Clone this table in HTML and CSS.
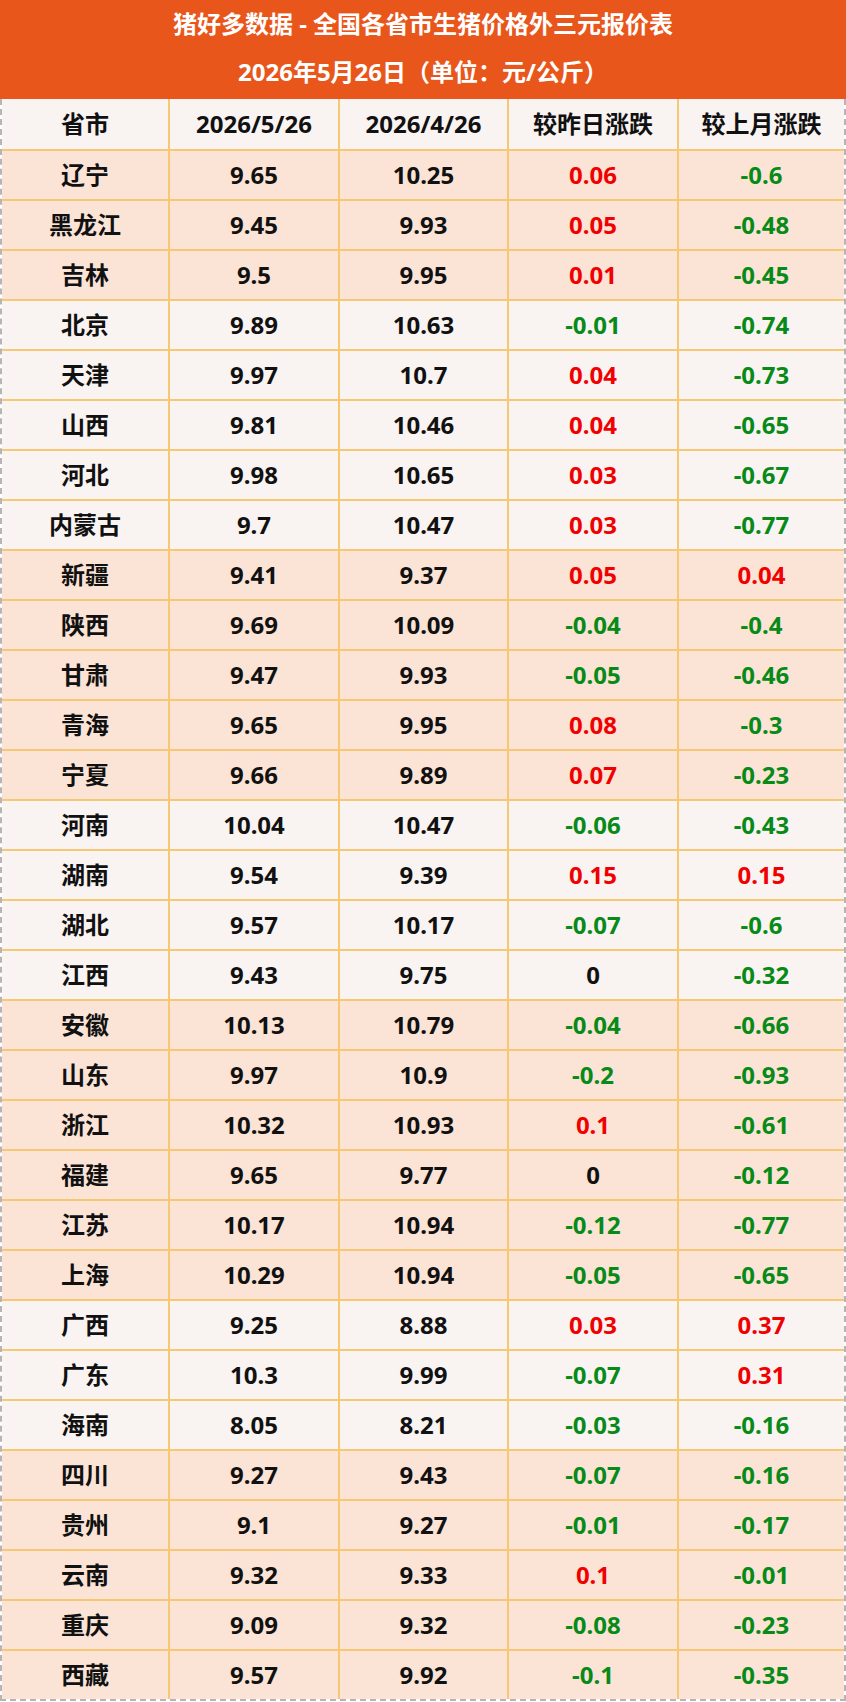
FILE: index.html
```html
<!DOCTYPE html>
<html lang="zh-CN">
<head>
<meta charset="utf-8">
<title>猪好多数据</title>
<link rel="stylesheet" href="styles.css">
</head>
<body>
<div class="page">
  <div class="title">
    <div class="title-line">猪好多数据 - 全国各省市生猪价格外三元报价表</div>
    <div class="title-line">2026年5月26日（单位：元/公斤）</div>
  </div>
  <div class="sheet">
    <div class="row head">
      <div class="cell">省市</div><div class="cell">2026/5/26</div><div class="cell">2026/4/26</div><div class="cell">较昨日涨跌</div><div class="cell">较上月涨跌</div>
    </div>
    <div class="row peach"><div class="cell">辽宁</div><div class="cell">9.65</div><div class="cell">10.25</div><div class="cell up">0.06</div><div class="cell down">-0.6</div></div>
    <div class="row peach"><div class="cell">黑龙江</div><div class="cell">9.45</div><div class="cell">9.93</div><div class="cell up">0.05</div><div class="cell down">-0.48</div></div>
    <div class="row peach"><div class="cell">吉林</div><div class="cell">9.5</div><div class="cell">9.95</div><div class="cell up">0.01</div><div class="cell down">-0.45</div></div>
    <div class="row light"><div class="cell">北京</div><div class="cell">9.89</div><div class="cell">10.63</div><div class="cell down">-0.01</div><div class="cell down">-0.74</div></div>
    <div class="row light"><div class="cell">天津</div><div class="cell">9.97</div><div class="cell">10.7</div><div class="cell up">0.04</div><div class="cell down">-0.73</div></div>
    <div class="row light"><div class="cell">山西</div><div class="cell">9.81</div><div class="cell">10.46</div><div class="cell up">0.04</div><div class="cell down">-0.65</div></div>
    <div class="row light"><div class="cell">河北</div><div class="cell">9.98</div><div class="cell">10.65</div><div class="cell up">0.03</div><div class="cell down">-0.67</div></div>
    <div class="row light"><div class="cell">内蒙古</div><div class="cell">9.7</div><div class="cell">10.47</div><div class="cell up">0.03</div><div class="cell down">-0.77</div></div>
    <div class="row peach"><div class="cell">新疆</div><div class="cell">9.41</div><div class="cell">9.37</div><div class="cell up">0.05</div><div class="cell up">0.04</div></div>
    <div class="row peach"><div class="cell">陕西</div><div class="cell">9.69</div><div class="cell">10.09</div><div class="cell down">-0.04</div><div class="cell down">-0.4</div></div>
    <div class="row peach"><div class="cell">甘肃</div><div class="cell">9.47</div><div class="cell">9.93</div><div class="cell down">-0.05</div><div class="cell down">-0.46</div></div>
    <div class="row peach"><div class="cell">青海</div><div class="cell">9.65</div><div class="cell">9.95</div><div class="cell up">0.08</div><div class="cell down">-0.3</div></div>
    <div class="row peach"><div class="cell">宁夏</div><div class="cell">9.66</div><div class="cell">9.89</div><div class="cell up">0.07</div><div class="cell down">-0.23</div></div>
    <div class="row light"><div class="cell">河南</div><div class="cell">10.04</div><div class="cell">10.47</div><div class="cell down">-0.06</div><div class="cell down">-0.43</div></div>
    <div class="row light"><div class="cell">湖南</div><div class="cell">9.54</div><div class="cell">9.39</div><div class="cell up">0.15</div><div class="cell up">0.15</div></div>
    <div class="row light"><div class="cell">湖北</div><div class="cell">9.57</div><div class="cell">10.17</div><div class="cell down">-0.07</div><div class="cell down">-0.6</div></div>
    <div class="row light"><div class="cell">江西</div><div class="cell">9.43</div><div class="cell">9.75</div><div class="cell">0</div><div class="cell down">-0.32</div></div>
    <div class="row peach"><div class="cell">安徽</div><div class="cell">10.13</div><div class="cell">10.79</div><div class="cell down">-0.04</div><div class="cell down">-0.66</div></div>
    <div class="row peach"><div class="cell">山东</div><div class="cell">9.97</div><div class="cell">10.9</div><div class="cell down">-0.2</div><div class="cell down">-0.93</div></div>
    <div class="row peach"><div class="cell">浙江</div><div class="cell">10.32</div><div class="cell">10.93</div><div class="cell up">0.1</div><div class="cell down">-0.61</div></div>
    <div class="row peach"><div class="cell">福建</div><div class="cell">9.65</div><div class="cell">9.77</div><div class="cell">0</div><div class="cell down">-0.12</div></div>
    <div class="row peach"><div class="cell">江苏</div><div class="cell">10.17</div><div class="cell">10.94</div><div class="cell down">-0.12</div><div class="cell down">-0.77</div></div>
    <div class="row peach"><div class="cell">上海</div><div class="cell">10.29</div><div class="cell">10.94</div><div class="cell down">-0.05</div><div class="cell down">-0.65</div></div>
    <div class="row light"><div class="cell">广西</div><div class="cell">9.25</div><div class="cell">8.88</div><div class="cell up">0.03</div><div class="cell up">0.37</div></div>
    <div class="row light"><div class="cell">广东</div><div class="cell">10.3</div><div class="cell">9.99</div><div class="cell down">-0.07</div><div class="cell up">0.31</div></div>
    <div class="row light"><div class="cell">海南</div><div class="cell">8.05</div><div class="cell">8.21</div><div class="cell down">-0.03</div><div class="cell down">-0.16</div></div>
    <div class="row peach"><div class="cell">四川</div><div class="cell">9.27</div><div class="cell">9.43</div><div class="cell down">-0.07</div><div class="cell down">-0.16</div></div>
    <div class="row peach"><div class="cell">贵州</div><div class="cell">9.1</div><div class="cell">9.27</div><div class="cell down">-0.01</div><div class="cell down">-0.17</div></div>
    <div class="row peach"><div class="cell">云南</div><div class="cell">9.32</div><div class="cell">9.33</div><div class="cell up">0.1</div><div class="cell down">-0.01</div></div>
    <div class="row peach"><div class="cell">重庆</div><div class="cell">9.09</div><div class="cell">9.32</div><div class="cell down">-0.08</div><div class="cell down">-0.23</div></div>
    <div class="row peach"><div class="cell">西藏</div><div class="cell">9.57</div><div class="cell">9.92</div><div class="cell down">-0.1</div><div class="cell down">-0.35</div></div>
  </div>
</div>
</body>
</html>
```

FILE: styles.css
```css
* { box-sizing: border-box; }
html, body { margin: 0; padding: 0; background: #ffffff; }
body {
  font-family: "Noto Sans", "Noto Sans CJK SC", sans-serif;
  font-weight: 700;
  color: #111111;
}
.page { width: 846px; }
.title {
  height: 99px;
  background: #e8561b;
  color: #ffffff;
  display: flex;
  flex-direction: column;
}
.title-line {
  height: 48px;
  display: flex;
  align-items: center;
  justify-content: center;
  font-size: 24px;
  line-height: 1;
}
.sheet {
  border: 2px dashed #b5b5b5;
  border-top: none;
}
.row {
  display: grid;
  grid-template-columns: 166px 170px 169px 170px 167px;
  height: 50px;
  border-top: 2px solid #f7c874;
}
.row.head { border-top: none; background: #f9f4f1; }
.row.peach { background: #fbe4d6; }
.row.light { background: #f9f4f1; }
.cell {
  display: flex;
  align-items: center;
  justify-content: center;
  font-size: 24px;
  line-height: 1;
  border-left: 2px solid #f7c874;
}
.cell:first-child { border-left: none; }
.up { color: #f00000; }
.down { color: #078a17; }
```
